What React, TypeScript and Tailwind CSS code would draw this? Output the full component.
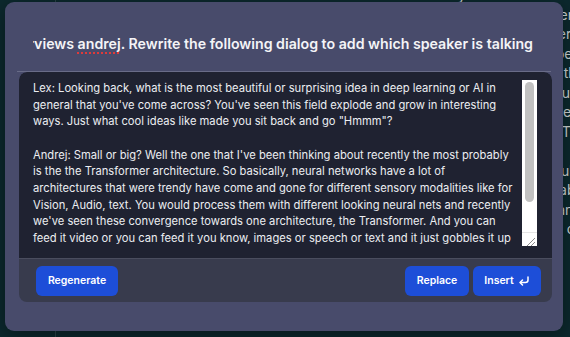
import React from "react";

const bgLines = [
  "                                                    that it was trainable and very efficient to run on our hardware and so this paper, it's pretty amazing",
  "just by a small set of people who realised what they had in their hands. Attention is all you need, which",
  "is kind of a meme, a little bit tongue in cheek. I think it is a remarkable paper and the transformer",
  "architecture, and it's really simple and general purpose and it happens to be an expressive computer",
  "that is optimizable by backpropagation and efficient on our hardware. And the transformer is in the",
  "forward pass, a general purpose differentiable computer. Yes. So it turns out it's expressive in the",
  "that you design it to be very expressive in the forward pass. And also by the residual connections",
  "trainable. And the design of the transformer is very parallel, very efficient. The attention. And",
  "",
  "So this is pretty interesting and the insight was that they probably did not fully anticipate where",
  "the transformer has been largely unchanged. The resilience of it is remarkable. Yes. People have",
  "people have tried to play with the architecture. But the core is very stable and very resilient and",
  "we keep scaling it up, and scaling the data set and the evaluation. And you can't make it very easily",
  "so this is really remarkable. Yes, I think so.",
];

const textLines = [
  "Lex: Looking back, what is the most beautiful or surprising idea in deep learning or AI in",
  "general that you've come across? You've seen this field explode and grow in interesting",
  "ways. Just what cool ideas like made you sit back and go \"Hmmm\"?",
  "",
  "Andrej: Small or big? Well the one that I've been thinking about recently the most probably",
  "is the the Transformer architecture. So basically, neural networks have a lot of",
  "architectures that were trendy have come and gone for different sensory modalities like for",
  "Vision, Audio, text. You would process them with different looking neural nets and recently",
  "we've seen these convergence towards one architecture, the Transformer. And you can",
  "feed it video or you can feed it you know, images or speech or text and it just gobbles it up",
];

function EnterIcon() {
  return (
    <svg width="12" height="12" viewBox="0 0 24 24" fill="none" stroke="currentColor" strokeWidth="3" strokeLinecap="round" strokeLinejoin="round">
      <path d="M20 4v6a5 5 0 0 1-5 5H5" />
      <path d="m9 10-5 5 5 5" />
    </svg>
  );
}

export default function App() {
  return (
    <div className="relative w-[570px] h-[337px] overflow-hidden bg-[#0c292e] font-['Inter',sans-serif]">
      {/* background page */}
      <div className="flex h-full">
        <div className="w-[56px] shrink-0 border-r border-[#2a4448]" />
        <div className="flex-1 pl-[14px] -mt-[15px] text-[14px] leading-[19.5px] text-[#cfd6d8] whitespace-pre">
          {bgLines.map((l, i) => (
            <div key={i} className="h-[19.5px]">{l}</div>
          ))}
        </div>
      </div>

      {/* modal */}
      <div className="absolute left-[5px] top-[2px] w-[558px] h-[329px] rounded-[9px] bg-[#484b6b] shadow-[0_4px_20px_rgba(0,0,0,0.4)] flex flex-col">
        <div className="mx-[12px] h-[70px] border-b border-[#696c88] pt-[31px] flex justify-end pr-[18px] pl-[16px]">
          <div className="w-[500px] overflow-hidden flex justify-end">
            <div className="whitespace-nowrap text-[14.2px] leading-[22px] font-semibold text-[#f4f4f7]">
              Lex Fridman interviews{" "}
              <span className="underline decoration-dotted decoration-[#e03a3a] decoration-2 underline-offset-[3px]">andrej</span>
              . Rewrite the following dialog to add which speaker is talking
            </div>
          </div>
        </div>

        <div className="ml-[14px] mr-[11px] rounded-[8px] overflow-hidden flex flex-col">
          <div className="h-[187px] bg-[#1f2231] rounded-t-[8px] border-b border-[#4a4d5e] flex">
            <div className="flex-1 pl-[14px] pt-[8px] text-[11.2px] leading-[16.67px] text-[#eceef2] whitespace-nowrap overflow-hidden">
              {textLines.map((l, i) => (
                <div key={i} className="h-[16.67px]">{l}</div>
              ))}
            </div>
            <div className="w-[15px] mr-[15px] mt-[8px] h-[166px] bg-white relative flex flex-col items-center">
              <div className="mt-[2px] w-[9px] h-[120px] rounded-full bg-[#c1c1c1]" />
              <div className="absolute bottom-0 right-0 w-[15px] h-[14px] border-t border-[#e5e5e5]">
                <svg width="15" height="14" viewBox="0 0 15 14" className="block">
                  <path d="M13 5 L5 13" stroke="#8a8a8a" strokeWidth="1" />
                  <path d="M13 9 L9 13" stroke="#8a8a8a" strokeWidth="1" />
                </svg>
              </div>
            </div>
          </div>
          <div className="h-[43px] bg-[#383b4d] flex items-start pt-[7px] pl-[17px] pr-[11px]">
            <button className="w-[82px] h-[30px] rounded-[6px] bg-[#1d4ed8] text-white text-[10.5px] font-semibold">
              Regenerate
            </button>
            <div className="flex-1" />
            <div className="flex gap-[4px]">
              <button className="w-[64px] h-[30px] rounded-[6px] bg-[#1d4ed8] text-white text-[10.5px] font-semibold">
                Replace
              </button>
              <button className="w-[68px] h-[30px] rounded-[6px] bg-[#1d4ed8] text-white text-[10.5px] font-semibold flex items-center justify-center gap-[4px]">
                Insert <EnterIcon />
              </button>
            </div>
          </div>
        </div>
      </div>
    </div>
  );
}
